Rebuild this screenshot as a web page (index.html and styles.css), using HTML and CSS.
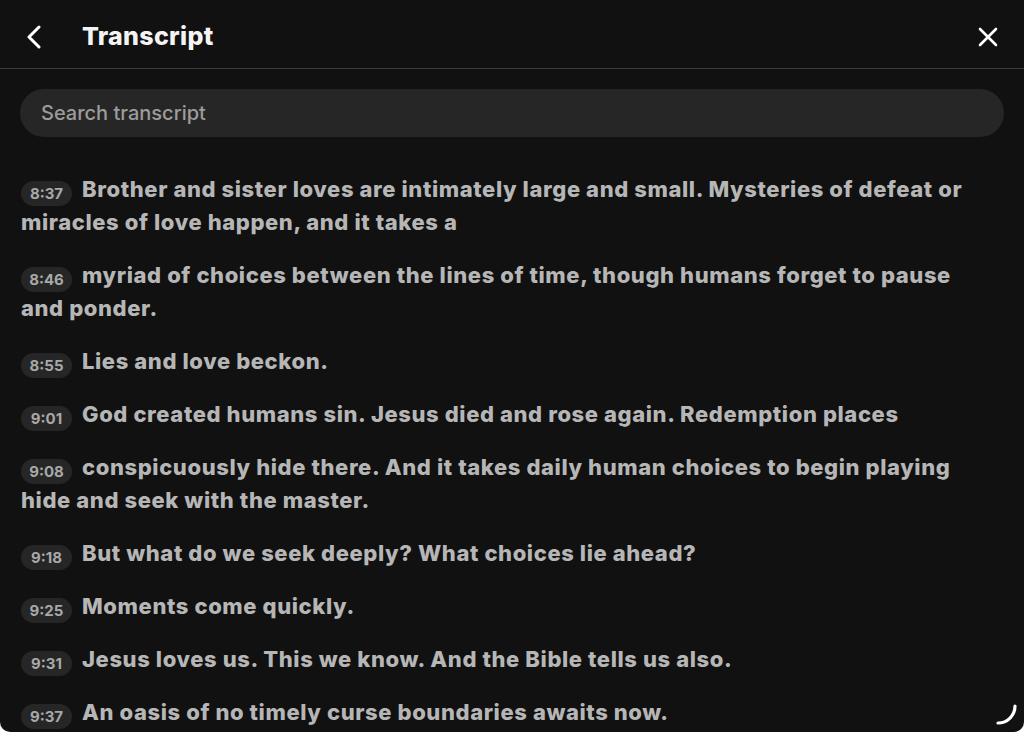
FILE: index.html
```html
<!DOCTYPE html>
<html lang="en">
<head>
<meta charset="utf-8">
<title>Transcript</title>
<link rel="stylesheet" href="styles.css">
</head>
<body>
<div class="panel">
  <header class="topbar">
    <button class="icon-btn back" aria-label="Back">
      <svg width="16" height="24" viewBox="0 0 16 24"><path d="M13 2 L3 12 L13 22" fill="none" stroke="#fff" stroke-width="3" stroke-linecap="round" stroke-linejoin="round"/></svg>
    </button>
    <h1 class="title">Transcript</h1>
    <button class="icon-btn close" aria-label="Close">
      <svg width="20" height="20" viewBox="0 0 20 20"><path d="M2 2 L18 18 M18 2 L2 18" fill="none" stroke="#fff" stroke-width="2.6" stroke-linecap="round"/></svg>
    </button>
  </header>
  <div class="search-wrap">
    <div class="search">Search transcript</div>
  </div>
  <div class="list">
    <p class="entry"><span class="ts">8:37</span>Brother and sister loves are intimately large and small. Mysteries of defeat or miracles of love happen, and it takes a</p>
    <p class="entry"><span class="ts">8:46</span>myriad of choices between the lines of time, though humans forget to pause and ponder.</p>
    <p class="entry"><span class="ts">8:55</span>Lies and love beckon.</p>
    <p class="entry"><span class="ts">9:01</span>God created humans sin. Jesus died and rose again. Redemption places</p>
    <p class="entry"><span class="ts">9:08</span>conspicuously hide there. And it takes daily human choices to begin playing hide and seek with the master.</p>
    <p class="entry"><span class="ts">9:18</span>But what do we seek deeply? What choices lie ahead?</p>
    <p class="entry"><span class="ts">9:25</span>Moments come quickly.</p>
    <p class="entry"><span class="ts">9:31</span>Jesus loves us. This we know. And the Bible tells us also.</p>
    <p class="entry"><span class="ts">9:37</span>An oasis of no timely curse boundaries awaits now.</p>
  </div>
  <svg class="grip" width="24" height="24" viewBox="0 0 24 24"><path d="M20 2 A17 17 0 0 1 3 19" fill="none" stroke="#fff" stroke-width="3.2" stroke-linecap="round"/></svg>
</div>
</body>
</html>
```

FILE: styles.css
```css
* { box-sizing: border-box; }
html, body {
  margin: 0;
  padding: 0;
  background: #ffffff;
  height: 732px;
  overflow: hidden;
}
.panel {
  position: relative;
  width: 1024px;
  height: 732px;
  background: #111111;
  border-radius: 0 0 10px 10px;
  overflow: hidden;
  font-family: Inter, "Noto Sans", sans-serif;
}
.topbar {
  height: 69px;
  display: flex;
  align-items: center;
  border-bottom: 1px solid #3a3a3a;
  padding: 5px 20px 0 26px;
}
.icon-btn {
  background: none;
  border: 0;
  padding: 0;
  display: flex;
  align-items: center;
  justify-content: center;
  cursor: pointer;
}
.back {
  width: 16px;
  height: 24px;
}
.title {
  margin: 0 0 0 40px;
  font-size: 25px;
  font-weight: 800;
  color: #f4f4f4;
  letter-spacing: 0.3px;
  flex: 1;
  line-height: 1;
}
.close {
  width: 20px;
  height: 20px;
  margin-right: 6px;
}
.search-wrap {
  padding: 20px 20px 0 20px;
}
.search {
  height: 48px;
  border-radius: 24px;
  background: #262626;
  display: flex;
  align-items: center;
  padding-left: 21px;
  font-size: 20px;
  font-weight: 500;
  color: #9c9c9c;
}
.list {
  padding: 36px 40px 0 21px;
  display: flex;
  flex-direction: column;
  gap: 20px;
}
.entry {
  margin: 0;
  font-size: 22px;
  line-height: 33px;
  font-weight: 800;
  letter-spacing: 0.6px;
  color: #b6b6b6;
}
.ts {
  display: inline-block;
  width: 51px;
  height: 25px;
  line-height: 25px;
  border-radius: 13px;
  background: #262626;
  color: #a8a8a8;
  font-size: 15px;
  font-weight: 700;
  letter-spacing: 0;
  text-align: center;
  margin-right: 10px;
  vertical-align: bottom;
}
.grip {
  position: absolute;
  right: 5px;
  bottom: 4px;
}
```
